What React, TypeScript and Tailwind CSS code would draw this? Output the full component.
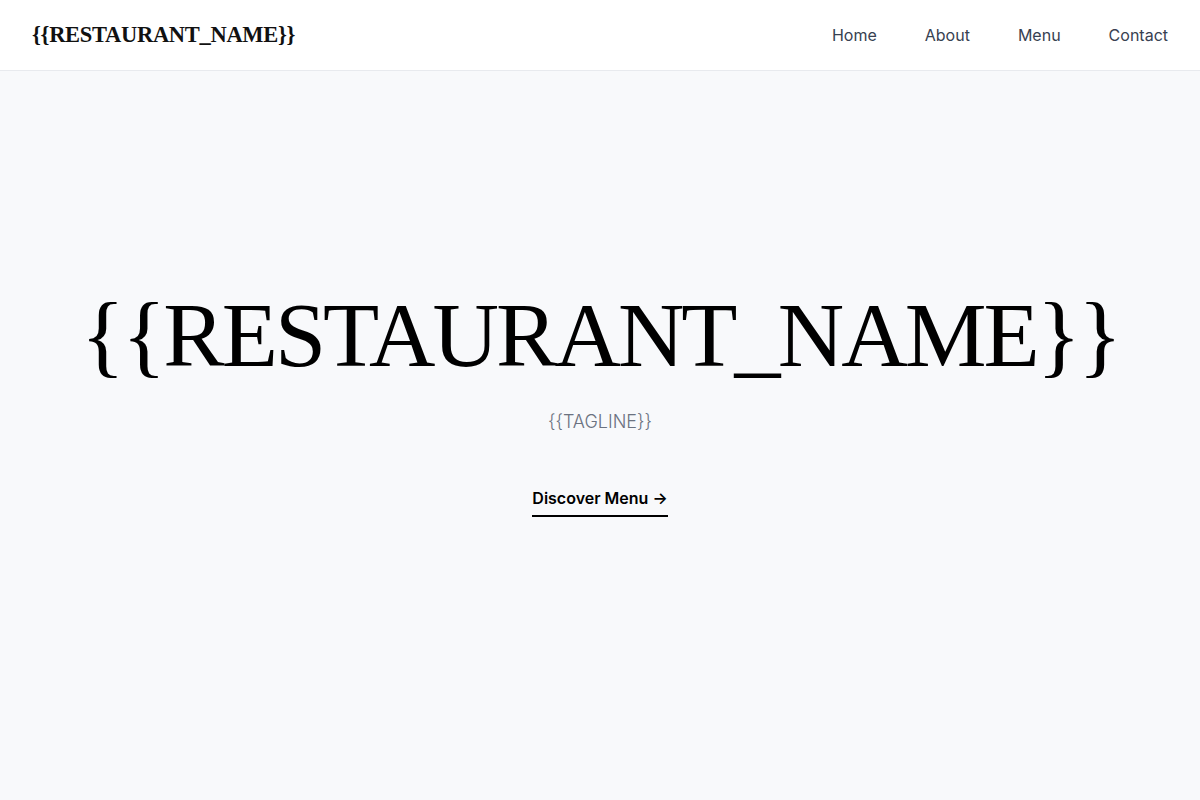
import React from 'react';

const navLinks = ['Home', 'About', 'Menu', 'Contact'];

const Header: React.FC = () => {
    return (
        <header className="h-[71px] bg-white border-b border-[#e8eaee] px-8 flex items-center justify-between">
            <a href="#" className="text-[22.5px] font-bold text-[#111] tracking-[-0.3px]" style={{ fontFamily: '"Liberation Serif", serif' }}>
                {'{{RESTAURANT_NAME}}'}
            </a>
            <nav className="flex items-center gap-12">
                {navLinks.map((link) => (
                    <a key={link} href="#" className="text-[16px] text-[#374151]">
                        {link}
                    </a>
                ))}
            </nav>
        </header>
    );
};

const Hero: React.FC = () => {
    return (
        <section className="h-[729px] flex flex-col items-center justify-center pb-[66px]">
            <h1
                className="text-[92px] leading-none tracking-[-2.95px] text-black"
                style={{ fontFamily: '"Liberation Serif", serif' }}
            >
                {'{{RESTAURANT_NAME}}'}
            </h1>
            <p className="mt-[27px] text-[18px] font-light text-[#6b7280]">{'{{TAGLINE}}'}</p>
            <a href="#" className="mt-[51px] pb-[5px] border-b-2 border-black text-[16px] font-semibold text-black">
                Discover Menu →
            </a>
        </section>
    );
};

export default function App() {
    return (
        <div className="min-h-screen bg-[#f8f9fb]" style={{ fontFamily: 'Inter, sans-serif' }}>
            <Header />
            <Hero />
        </div>
    );
}
